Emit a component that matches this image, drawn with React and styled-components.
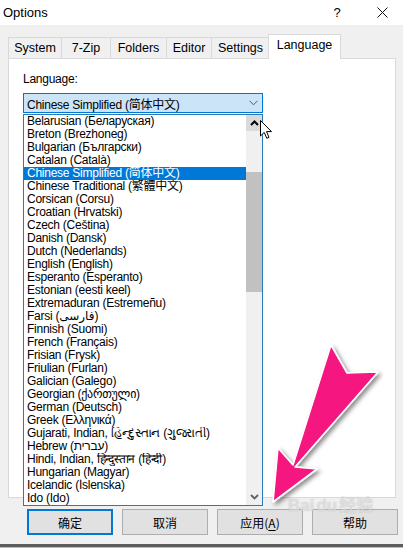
import React from "react";
import styled, { createGlobalStyle } from "styled-components";

const GlobalStyle = createGlobalStyle`
  html, body { margin: 0; padding: 0; background: #f0f0f0; }
  body { font-family: "Liberation Sans", Arial, "Noto Sans CJK SC", sans-serif; }
`;

const tabs = [
  { name: "System", width: 53 },
  { name: "7-Zip", width: 49 },
  { name: "Folders", width: 56 },
  { name: "Editor", width: 45 },
  { name: "Settings", width: 58 },
  { name: "Language", width: 73, active: true },
];

const languages = [
  "Belarusian (Беларуская)",
  "Breton (Brezhoneg)",
  "Bulgarian (Български)",
  "Catalan (Català)",
  "Chinese Simplified (简体中文)",
  "Chinese Traditional (繁體中文)",
  "Corsican (Corsu)",
  "Croatian (Hrvatski)",
  "Czech (Čeština)",
  "Danish (Dansk)",
  "Dutch (Nederlands)",
  "English (English)",
  "Esperanto (Esperanto)",
  "Estonian (eesti keel)",
  "Extremaduran (Estremeñu)",
  "Farsi (فارسی)",
  "Finnish (Suomi)",
  "French (Français)",
  "Frisian (Frysk)",
  "Friulian (Furlan)",
  "Galician (Galego)",
  "Georgian (ქართული)",
  "German (Deutsch)",
  "Greek (Ελληνικά)",
  "Gujarati, Indian, હિન્દુસ્તાન (ગુજરાતી)",
  "Hebrew (עברית)",
  "Hindi, Indian, हिन्दुस्तान (हिन्दी)",
  "Hungarian (Magyar)",
  "Icelandic (Íslenska)",
  "Ido (Ido)",
];

const SELECTED = "Chinese Simplified (简体中文)";

export default function App() {
  return (
    <>
      <GlobalStyle />
      <Window>
        <TitleBar>
          <Title>Options</Title>
          <TitleHelp>?</TitleHelp>
          <TitleClose>
            <svg width="11" height="11" viewBox="0 0 11 11">
              <path d="M0.5 0.5 L10.5 10.5 M10.5 0.5 L0.5 10.5" stroke="#111" strokeWidth="1" />
            </svg>
          </TitleClose>
        </TitleBar>

        <TabRow>
          {tabs.map((t) => (
            <Tab key={t.name} $width={t.width} $active={t.active}>
              {t.name}
            </Tab>
          ))}
        </TabRow>

        <Panel>
          <FieldLabel>Language:</FieldLabel>
          <ComboWrap>
            <Combo>
              <ComboText>{SELECTED}</ComboText>
              <svg width="9" height="6" viewBox="0 0 9 6">
                <path d="M0.5 0.8 L4.5 4.8 L8.5 0.8" fill="none" stroke="#5a5a5a" strokeWidth="1" />
              </svg>
            </Combo>
            <DropList>
              <Items>
                {languages.map((l) => (
                  <Item key={l} $selected={l === SELECTED}>
                    {l}
                  </Item>
                ))}
              </Items>
              <ScrollBar>
                <ScrollButton $hover>
                  <svg width="9" height="6" viewBox="0 0 9 6">
                    <path d="M1 5 L4.5 1.5 L8 5" fill="none" stroke="#000" strokeWidth="2" />
                  </svg>
                </ScrollButton>
                <Track>
                  <Thumb />
                </Track>
                <ScrollButton>
                  <svg width="9" height="6" viewBox="0 0 9 6">
                    <path d="M1 1 L4.5 4.5 L8 1" fill="none" stroke="#606060" strokeWidth="1.8" />
                  </svg>
                </ScrollButton>
              </ScrollBar>
            </DropList>
          </ComboWrap>
        </Panel>

        <ButtonRow>
          <DlgButton $default>确定</DlgButton>
          <DlgButton>取消</DlgButton>
          <DlgButton>
            应用(<u>A</u>)
          </DlgButton>
          <DlgButton>帮助</DlgButton>
        </ButtonRow>

        <BottomEdge />

        <Watermark>
          Bai<Paw>du</Paw>经验
        </Watermark>

        <Overlay width="403" height="548" viewBox="0 0 403 548">
          <defs>
            <filter id="shadow" x="-20%" y="-20%" width="140%" height="140%">
              <feDropShadow dx="2.5" dy="2.5" stdDeviation="2" floodColor="#000" floodOpacity="0.45" />
            </filter>
          </defs>
          <polygon
            points="331,345 347,373 378,372 295,467 317,469 273,502 278,448 293,465"
            fill="#f5127f"
            stroke="#fff"
            strokeWidth="1.6"
            strokeLinejoin="round"
            filter="url(#shadow)"
          />
          <path
            d="M260.5 120.5 L260.5 136 L264.2 132.4 L266.8 138.3 L269 137.3 L266.5 131.6 L271.5 131.6 Z"
            fill="#fff"
            stroke="#000"
            strokeWidth="1"
            strokeLinejoin="round"
          />
        </Overlay>
      </Window>
    </>
  );
}

const Window = styled.div`
  position: relative;
  width: 403px;
  height: 548px;
  background: #f0f0f0;
  display: flex;
  flex-direction: column;
  overflow: hidden;
`;

const TitleBar = styled.div`
  height: 25px;
  background: #fff;
  display: flex;
  align-items: center;
  padding-left: 3px;
  font-family: "Liberation Sans", Arial, sans-serif;
  font-size: 13px;
  color: #000;
`;

const Title = styled.div`
  flex: 1;
`;

const TitleHelp = styled.div`
  width: 14px;
  font-size: 13px;
  margin-right: 33px;
  text-align: center;
`;

const TitleClose = styled.div`
  width: 11px;
  height: 11px;
  margin-right: 15px;
  display: flex;
`;

const TabRow = styled.div`
  display: flex;
  align-items: flex-end;
  height: 24px;
  margin: 9px 0 0 8px;
  position: relative;
  z-index: 1;
`;

const Tab = styled.div`
  box-sizing: border-box;
  width: ${(p) => p.$width}px;
  height: ${(p) => (p.$active ? 25 : 21)}px;
  margin-bottom: ${(p) => (p.$active ? -1 : 0)}px;
  ${(p) => (p.$active ? "margin-left: -1px;" : "")}
  border: 1px solid #d9d9d9;
  border-bottom: none;
  ${(p) => (p.$active ? "" : "border-right: none;")}
  background: ${(p) => (p.$active ? "#fff" : "#f0f0f0")};
  display: flex;
  align-items: center;
  justify-content: center;
  padding-bottom: ${(p) => (p.$active ? 4 : 0)}px;
  font-size: 12.5px;
  color: #000;
  white-space: nowrap;
`;

const Panel = styled.div`
  box-sizing: border-box;
  width: 388px;
  height: 440px;
  margin-left: 8px;
  background: #fff;
  border: 1px solid #d9d9d9;
  padding: 14px 0 0 14px;
`;

const FieldLabel = styled.div`
  font-size: 12px;
  line-height: 13px;
  letter-spacing: -0.25px;
  color: #000;
`;

const ComboWrap = styled.div`
  position: relative;
  width: 240px;
  margin-top: 7px;
`;

const Combo = styled.div`
  box-sizing: border-box;
  height: 20px;
  border: 1px solid #0078d7;
  background: #cce4f7;
  display: flex;
  align-items: center;
  padding: 0 4px 0 3px;
  justify-content: space-between;
`;

const ComboText = styled.span`
  font-size: 12px;
  letter-spacing: -0.25px;
  color: #000;
  white-space: nowrap;
`;

const DropList = styled.div`
  position: absolute;
  top: 21px;
  left: 0;
  width: 240px;
  box-sizing: border-box;
  border: 1px solid #2a7ab9;
  background: #fff;
  display: flex;
  z-index: 2;
`;

const Items = styled.div`
  flex: 1;
  min-width: 0;
`;

const Item = styled.div`
  height: 13px;
  line-height: 13px;
  padding-left: 3px;
  font-size: 12px;
  letter-spacing: -0.25px;
  white-space: nowrap;
  overflow: hidden;
  background: ${(p) => (p.$selected ? "#0078d7" : "transparent")};
  color: ${(p) => (p.$selected ? "#fff" : "#000")};
  font-family: "Liberation Sans", Arial, "DejaVu Sans", "Noto Sans CJK SC", sans-serif;
`;

const ScrollBar = styled.div`
  width: 16px;
  background: #f0f0f0;
  display: flex;
  flex-direction: column;
`;

const ScrollButton = styled.div`
  height: 16px;
  background: ${(p) => (p.$hover ? "#dadada" : "#f0f0f0")};
  display: flex;
  align-items: center;
  justify-content: center;
`;

const Track = styled.div`
  flex: 1;
  padding-top: 41px;
`;

const Thumb = styled.div`
  width: 16px;
  height: 120px;
  background: #c1c1c1;
`;

const ButtonRow = styled.div`
  display: flex;
  justify-content: flex-end;
  gap: 9px;
  margin-top: 11px;
  padding-right: 5px;
`;

const DlgButton = styled.div`
  box-sizing: border-box;
  width: 86px;
  height: 26px;
  background: #e1e1e1;
  border: ${(p) => (p.$default ? "2px solid #0078d7" : "1px solid #adadad")};
  display: flex;
  align-items: center;
  justify-content: center;
  font-family: "Noto Sans CJK SC", "Liberation Sans", sans-serif;
  font-size: 12px;
  color: #000;

  u {
    text-decoration-thickness: 1px;
    text-underline-offset: 2px;
  }
`;

const BottomEdge = styled.div`
  margin-top: auto;
  height: 3px;
  background: #5c5c5c;
  border-bottom: 1px solid #bdbdbd;
`;

const Watermark = styled.div`
  position: absolute;
  left: 288px;
  top: 497px;
  font-family: "Liberation Sans", Arial, "Noto Sans CJK SC", sans-serif;
  font-weight: bold;
  font-size: 17px;
  line-height: 18px;
  color: rgba(255, 255, 255, 0.55);
  text-shadow: 0 0 1px rgba(120, 120, 120, 0.5);
  pointer-events: none;
`;

const Paw = styled.span`
  margin: 0 2px;
`;

const Overlay = styled.svg`
  position: absolute;
  left: 0;
  top: 0;
  pointer-events: none;
  z-index: 5;
`;
